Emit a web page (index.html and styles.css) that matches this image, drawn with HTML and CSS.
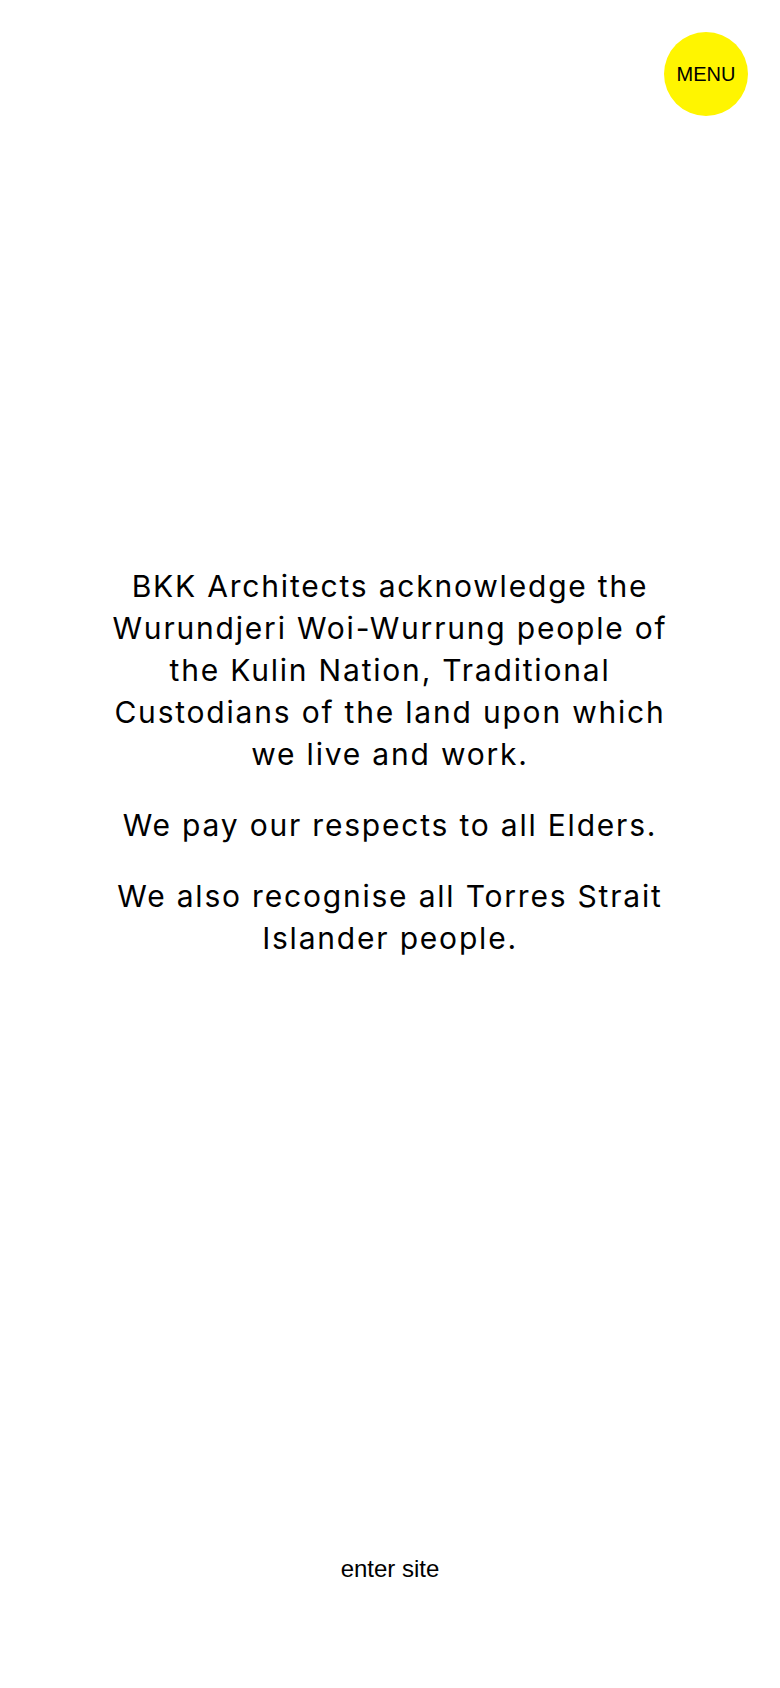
FILE: index.html
```html
<!DOCTYPE html>
<html lang="en">
<head>
<meta charset="utf-8">
<title>BKK Architects</title>
<link rel="stylesheet" href="styles.css">
</head>
<body>
<div class="page">
  <button class="menu-btn" type="button">MENU</button>
  <main class="ack">
    <p>BKK Architects acknowledge the Wurundjeri Woi-Wurrung people of the Kulin Nation, Traditional Custodians of the land upon which we live and work.</p>
    <p>We pay our respects to all Elders.</p>
    <p>We also recognise all Torres Strait Islander people.</p>
  </main>
  <footer class="foot">
    <a class="enter" href="#">enter site</a>
  </footer>
</div>
</body>
</html>
```
FILE: styles.css
```css
html, body {
  margin: 0;
  padding: 0;
  background: #fff;
}
.page {
  position: relative;
  min-height: 1688px;
  display: flex;
  flex-direction: column;
  align-items: center;
}
.menu-btn {
  position: absolute;
  top: 32px;
  right: 32px;
  width: 84px;
  height: 84px;
  border-radius: 50%;
  border: none;
  background: #fff500;
  color: #000;
  font-family: "Liberation Sans", Arial, sans-serif;
  font-size: 20px;
  padding: 0;
  cursor: pointer;
}
.ack {
  padding-top: 565px;
  width: 576px;
  text-align: center;
  font-family: Inter, "Noto Sans", sans-serif;
  font-size: 30px;
  line-height: 42px;
  letter-spacing: 1.8px;
  color: #000;
}
.ack p {
  margin: 0 0 29px;
}
.ack p:last-child {
  margin-bottom: 0;
}
.foot {
  margin-top: auto;
  padding-bottom: 105px;
}
.enter {
  display: block;
  font-family: "Liberation Sans", Arial, sans-serif;
  font-size: 24px;
  line-height: 28px;
  color: #000;
  text-decoration: none;
}
```
